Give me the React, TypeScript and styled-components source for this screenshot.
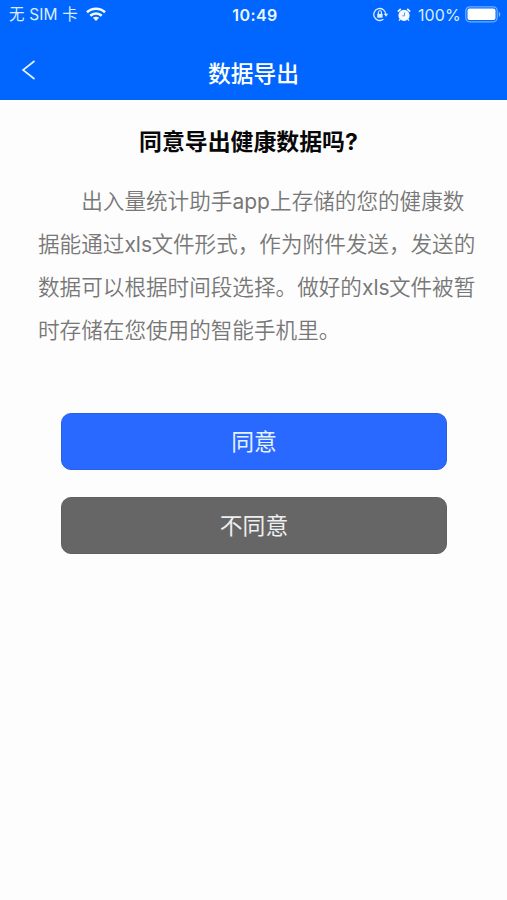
import React from "react";
import styled, { createGlobalStyle } from "styled-components";

const GlobalStyle = createGlobalStyle`
  * { box-sizing: border-box; }
  html, body { margin: 0; padding: 0; background: #fdfdfd; }
  body { font-family: Inter, "Noto Sans CJK SC", sans-serif; }
`;

const Screen = styled.div`
  width: 507px;
  height: 900px;
  overflow: hidden;
  display: flex;
  flex-direction: column;
  background: #fdfdfd;
`;

const Header = styled.header`
  height: 100px;
  flex: none;
  background: #0066ff;
  color: #fff;
`;

const StatusBar = styled.div`
  display: grid;
  grid-template-columns: 1fr auto 1fr;
  align-items: center;
  height: 29px;
  padding: 0 6px 0 9px;
  line-height: 28px;
  color: #d9edff;
`;

const Carrier = styled.div`
  display: flex;
  align-items: center;
  gap: 8px;
  font-size: 15.5px;
  letter-spacing: 0.15px;
  white-space: nowrap;
`;

const Clock = styled.div`
  font-size: 16px;
  font-weight: 600;
  letter-spacing: 0.4px;
  color: #eaf6ff;
`;

const Indicators = styled.div`
  display: flex;
  justify-content: flex-end;
  align-items: center;
`;

const BatteryLabel = styled.span`
  width: 42px;
  margin: 0 5px 0 7px;
  font-size: 16px;
  letter-spacing: 0.1px;
  white-space: nowrap;
`;

const AlarmSlot = styled.span`
  display: flex;
  margin-left: 8px;
`;

const NavBar = styled.nav`
  display: grid;
  grid-template-columns: 60px 1fr 60px;
  align-items: center;
  height: 71px;
`;

const BackButton = styled.button`
  display: flex;
  align-items: center;
  height: 44px;
  margin-top: 10px;
  padding: 0 0 0 21px;
  border: 0;
  background: none;
  color: #e6f4ff;
`;

const NavTitle = styled.h1`
  margin: 18px 0 0;
  text-align: center;
  font-size: 22.8px;
  line-height: 34px;
  font-weight: 500;
`;

const Content = styled.main`
  display: flex;
  flex-direction: column;
  padding: 25px 30px 0 38px;
`;

const Question = styled.h2`
  margin: 0 0 0 101px;
  font-size: 22.9px;
  line-height: 34px;
  font-weight: 700;
  color: #080808;
  white-space: nowrap;
`;

const Description = styled.p`
  margin: 21px 0 0;
  font-size: 21.6px;
  line-height: 43px;
  font-weight: 350;
  color: #777;
`;

const Line = styled.span<{ $indent?: boolean }>`
  display: block;
  padding-left: ${(p) => (p.$indent ? "2em" : "0")};
  white-space: nowrap;
`;

const Latin = styled.span<{ $width: number }>`
  display: inline-block;
  width: ${(p) => p.$width}px;
  font-size: 21px;
  font-weight: 400;
  text-align: center;
`;

const Actions = styled.div`
  display: flex;
  flex-direction: column;
  gap: 27px;
  margin: 61px 30px 0 23px;
`;

const ActionButton = styled.button<{ $primary?: boolean }>`
  height: 57px;
  padding: 0;
  border: 1px solid ${(p) => (p.$primary ? "#2960e4" : "#606060")};
  border-radius: 10px;
  background: ${(p) => (p.$primary ? "#2969ff" : "#666")};
  color: ${(p) => (p.$primary ? "#e5f2ff" : "#eee")};
  font-family: inherit;
  font-size: 22.8px;
  line-height: 34px;
`;

const WifiIcon = () => (
  <svg width="20" height="15" viewBox="0 0 20 15" fill="none" stroke="#f2faff" strokeWidth="2.6">
    <path d="M1 5.2C6 .5 14 .5 19 5.2" />
    <path d="M4.3 8.7c3.2-3 8.2-3 11.4 0" />
    <path d="M10 14l-3.1-3.2c1.8-1.5 4.4-1.5 6.2 0z" fill="#f2faff" stroke="none" />
  </svg>
);

const BackIcon = () => (
  <svg width="15" height="20" viewBox="0 0 15 20" fill="none" stroke="currentColor" strokeWidth="1.6">
    <path d="M13.5 1L2 10l11.5 9" />
  </svg>
);

const RotationLockIcon = () => (
  <svg width="16" height="15" viewBox="0 0 16 15" fill="none" stroke="#d9edff" strokeWidth="1.3">
    <path d="M12.8 7.2A6 6 0 1 0 10.4 12.3" />
    <path d="M10.8 6.8h4.4L13 9.7z" fill="#d9edff" stroke="none" />
    <path d="M5.3 7V5.4a1.6 1.6 0 0 1 3.2 0V7" strokeWidth="1.1" />
    <rect x="4.2" y="6.7" width="5.4" height="4" rx=".6" fill="#d9edff" stroke="none" />
  </svg>
);

const AlarmIcon = () => (
  <svg width="14" height="14" viewBox="0 0 14 14" fill="none" stroke="#f4faff">
    <circle cx="7" cy="7.4" r="5.6" fill="#f4faff" stroke="none" />
    <path d="M.8 3.6L3.8 1M13.2 3.6L10.2 1" strokeWidth="1.7" />
    <path d="M3 11.3l-1 1.3M11 11.3l1 1.3" strokeWidth="1.3" />
    <path d="M7.5 4.5v3.3H5.3" stroke="#5b9bf2" strokeWidth="1" />
  </svg>
);

const BatteryIcon = () => (
  <svg width="36" height="17" viewBox="0 0 36 17">
    <rect x=".8" y=".8" width="31.4" height="15" rx="4" fill="none" stroke="#6eb0ff" strokeWidth="1.2" />
    <rect x="2.5" y="2.5" width="28" height="11.6" rx="2" fill="#fff" />
    <path d="M33.8 5.7c2 .8 2 4.4 0 5.2z" fill="#72b4ff" />
  </svg>
);

export default function App() {
  return (
    <>
      <GlobalStyle />
      <Screen>
        <Header>
          <StatusBar>
            <Carrier>
              <span>无 SIM 卡</span>
              <WifiIcon />
            </Carrier>
            <Clock>10:49</Clock>
            <Indicators>
              <RotationLockIcon />
              <AlarmSlot>
                <AlarmIcon />
              </AlarmSlot>
              <BatteryLabel>100%</BatteryLabel>
              <BatteryIcon />
            </Indicators>
          </StatusBar>
          <NavBar>
            <BackButton aria-label="返回">
              <BackIcon />
            </BackButton>
            <NavTitle>数据导出</NavTitle>
          </NavBar>
        </Header>
        <Content>
          <Question>同意导出健康数据吗?</Question>
          <Description>
            <Line $indent>
              出入量统计助手<Latin $width={37.7}>app</Latin>上存储的您的健康数
            </Line>
            <Line>
              据能通过<Latin $width={27}>xls</Latin>文件形式，作为附件发送，发送的
            </Line>
            <Line>
              数据可以根据时间段选择。做好的<Latin $width={27}>xls</Latin>文件被暂
            </Line>
            <Line>时存储在您使用的智能手机里。</Line>
          </Description>
          <Actions>
            <ActionButton $primary>同意</ActionButton>
            <ActionButton>不同意</ActionButton>
          </Actions>
        </Content>
      </Screen>
    </>
  );
}
